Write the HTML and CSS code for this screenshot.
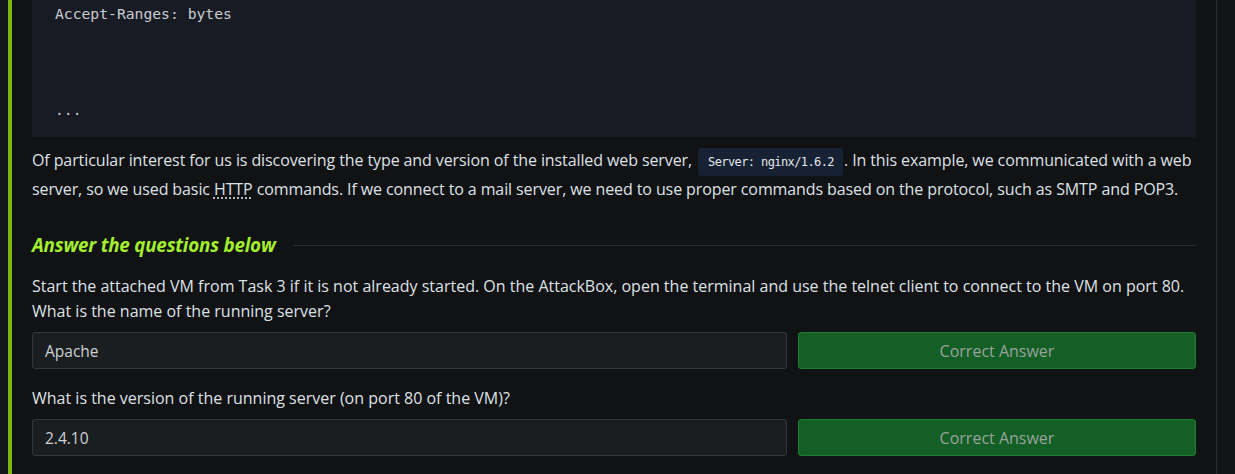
FILE: index.html
```html
<!DOCTYPE html>
<html>
<head>
<meta charset="utf-8">
<link rel="stylesheet" href="styles.css">
</head>
<body>
<div class="page">
  <div class="edge"></div>
  <div class="bar"></div>
  <main class="content">
    <pre class="codeblock">Accept-Ranges: bytes



...</pre>
    <p class="para">Of particular interest for us is discovering the type and version of the installed web server, <code class="inline">Server: nginx/1.6.2</code>. In this example, we communicated with a web server, so we used basic <abbr class="abbr">HTTP</abbr> commands. If we connect to a mail server, we need to use proper commands based on the protocol, such as SMTP and POP3.</p>
    <div class="qhead">
      <h3 class="qtitle">Answer the questions below</h3>
      <div class="rule"></div>
    </div>
    <p class="question">Start the attached VM from Task 3 if it is not already started. On the AttackBox, open the terminal and use the telnet client to connect to the VM on port 80.<br>What is the name of the running server?</p>
    <div class="answer">
      <div class="field">Apache</div>
      <button class="btn">Correct Answer</button>
    </div>
    <p class="question q2">What is the version of the running server (on port 80 of the VM)?</p>
    <div class="answer">
      <div class="field">2.4.10</div>
      <button class="btn">Correct Answer</button>
    </div>
  </main>
  <div class="gutter"></div>
  <div class="vline"></div>
  <div class="side"></div>
</div>
</body>
</html>
```
FILE: styles.css
```css
html, body {
  margin: 0;
  padding: 0;
  background: #111214;
  height: 100%;
  overflow: hidden;
}
.page {
  display: flex;
  height: 474px;
  font-family: "Open Sans", "Noto Sans", sans-serif;
  color: #dde1e6;
}
.edge {
  width: 8px;
  background: #141517;
  flex: none;
}
.bar {
  width: 4px;
  background: #7fb512;
  flex: none;
}
.content {
  width: 1164px;
  flex: none;
  padding-left: 20px;
}
.gutter {
  width: 20px;
  flex: none;
}
.vline {
  width: 1px;
  background: #2a2c2f;
  flex: none;
}
.side {
  flex: 1;
  background: #131416;
}
.codeblock {
  margin: 0;
  height: 137px;
  box-sizing: border-box;
  background: #181b23;
  padding: 2px 23px 0;
  font-family: "DejaVu Sans Mono", monospace;
  font-size: 14.7px;
  line-height: 24px;
  color: #c9ccd1;
}
.para {
  margin: 10px 0 0;
  font-size: 16px;
  line-height: 27px;
  letter-spacing: -0.1px;
}
.inline {
  font-family: "DejaVu Sans Mono", monospace;
  font-size: 12px;
  letter-spacing: -0.6px;
  background: #172134;
  color: #e3e6ea;
  padding: 7px 9px 7px 10px;
  border-radius: 3px;
  margin-left: 2px;
  margin-right: 1px;
}
.abbr {
  text-decoration: underline dotted;
  text-underline-offset: 3px;
}
.qhead {
  display: flex;
  align-items: center;
  margin-top: 30px;
  gap: 17px;
}
.qtitle {
  margin: 0;
  font-size: 18.8px;
  font-style: italic;
  font-weight: 700;
  color: #a3ef2e;
  line-height: 24px;
  letter-spacing: -0.2px;
}
.rule {
  flex: 1;
  height: 1px;
  background: #2a2c2f;
}
.question {
  margin: 17px 0 0;
  font-size: 16px;
  line-height: 25px;
}
.q2 {
  margin-top: 17px;
}
.answer {
  display: flex;
  gap: 11px;
  margin-top: 8px;
}
.field {
  flex: 1;
  height: 37px;
  box-sizing: border-box;
  background: #1b1e20;
  border: 1px solid #34373a;
  border-radius: 3px;
  padding: 0 12px;
  display: flex;
  align-items: center;
  font-size: 15.5px;
  color: #ced2d6;
}
.btn {
  width: 398px;
  height: 37px;
  box-sizing: border-box;
  background: #145f26;
  border: 1px solid #1e7d30;
  border-radius: 3px;
  color: #98a39b;
  font-family: "Open Sans", "Noto Sans", sans-serif;
  font-size: 16px;
  padding: 0;
}
```
